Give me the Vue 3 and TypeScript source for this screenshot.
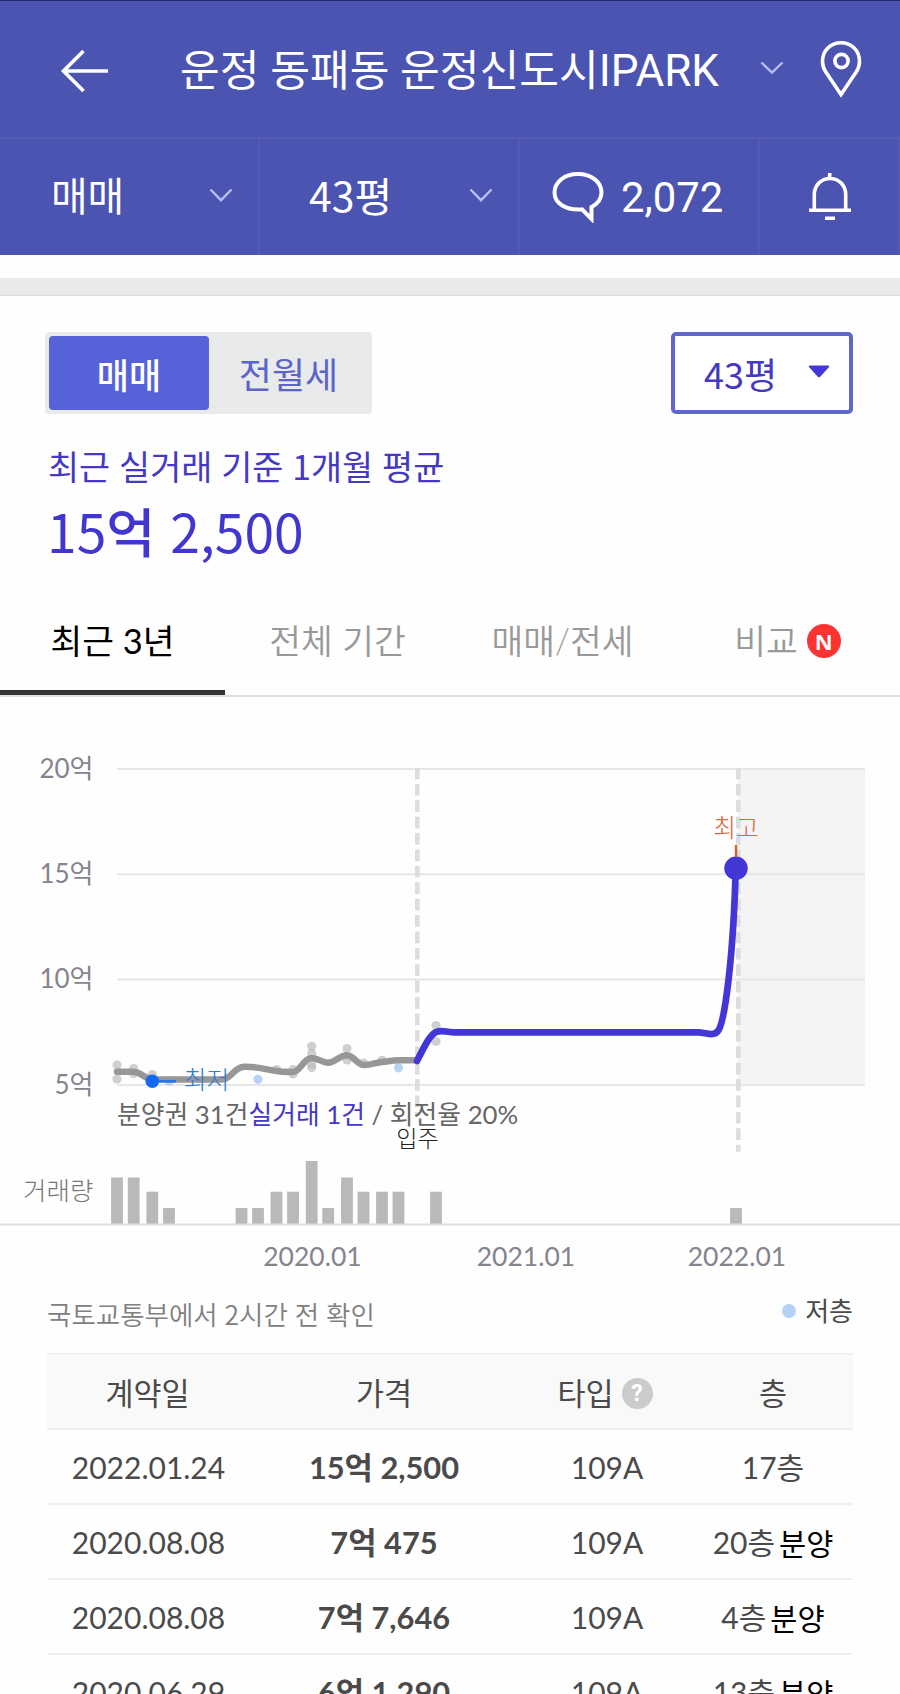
<script setup lang="ts">
interface Deal {
  date: string
  price: string
  type: string
  floor: string
  presale: boolean
}

const deals: Deal[] = [
  { date: '2022.01.24', price: '15억 2,500', type: '109A', floor: '17층', presale: false },
  { date: '2020.08.08', price: '7억 475', type: '109A', floor: '20층', presale: true },
  { date: '2020.08.08', price: '7억 7,646', type: '109A', floor: '4층', presale: true },
  { date: '2020.06.29', price: '6억 1,290', type: '109A', floor: '13층', presale: true },
]

const periods = ['최근 3년', '전체 기간', '매매/전세', '비교']

const gridLines = [
  { label: '20억', y: 769 },
  { label: '15억', y: 874.2 },
  { label: '10억', y: 979.6 },
  { label: '5억', y: 1085 },
]

const years = [
  { label: '2020.01', x: 312.5 },
  { label: '2021.01', x: 526 },
  { label: '2022.01', x: 737 },
]

// [centre x, top y] of each monthly volume bar
const bars: [number, number][] = [
  [117, 1177.5], [133.7, 1177.5], [152.3, 1191.7], [169, 1208],
  [241.5, 1208], [258, 1208], [276.5, 1191.7], [293, 1191.7],
  [311.7, 1161], [328.2, 1208], [347, 1177.5], [363.5, 1191.7],
  [382, 1191.7], [398.5, 1191.7], [436, 1191.7], [736, 1208],
]

const dots: [number, number][] = [
  [117, 1065], [117, 1079], [133.7, 1068.5], [133.7, 1073.5], [152.3, 1074.5], [276.5, 1069.5],
  [293, 1069.5], [293, 1074], [311.7, 1046.3], [311.7, 1053.5],
  [311.7, 1064], [311.7, 1067.5], [347, 1048.5], [347, 1060], [363.5, 1063],
  [382, 1060.3], [436, 1025.5], [436, 1041.5],
]

const lowDots: [number, number][] = [[169, 1081], [258, 1079.3], [398.5, 1067.8]]
</script>

<template>
  <div class="page">
    <header class="header">
      <div class="title-row">
        <svg class="back" width="50" height="46" viewBox="0 0 50 46">
          <path d="M23.500 3 L3.500 23 L23.500 43 M3 23 H48" />
        </svg>
        <h1>운정 동패동 운정신도시<span class="latin">IPARK</span></h1>
        <svg class="chev title-chev" width="24" height="14" viewBox="0 0 24 14"><path d="M1.500 1.500 L12 11.500 L22.500 1.500" /></svg>
        <svg class="pin" width="42" height="58" viewBox="0 0 42 58">
          <path d="M21 54.500 L5.500 31.500 C3.300 28.200 2.500 25.200 2.500 21.500 C2.500 10.500 10.500 2.800 21 2.800 C31.500 2.800 39.500 10.500 39.500 21.500 C39.500 25.200 38.700 28.200 36.500 31.500 Z" />
          <circle cx="21.500" cy="21" r="6.600" />
        </svg>
      </div>
      <div class="filter-row">
        <div class="filter">
          <span class="kr deal-kind">매매</span>
          <svg class="chev" width="24" height="14" viewBox="0 0 24 14"><path d="M1.500 1.500 L12 12.200 L22.500 1.500" /></svg>
        </div>
        <div class="filter size">
          <span class="kr">43평</span>
          <svg class="chev" width="24" height="14" viewBox="0 0 24 14"><path d="M1.500 1.500 L12 12.200 L22.500 1.500" /></svg>
        </div>
        <div class="filter talk">
          <svg class="bubble" width="54" height="52" viewBox="0 0 54 52">
            <path d="M40.500 48 V36 C47 32.500 50.500 27.500 50.500 21.500 C50.500 11 40.500 3 27 3 C13 3 3.500 11.500 3.500 21.500 C3.500 32 14 39.500 31 38.400 Z" />
          </svg>
          <span>2,072</span>
        </div>
        <div class="filter bell-cell">
          <svg width="44" height="50" viewBox="0 0 44 50">
            <path d="M6.300 38 V22.500 C6.300 13.500 13 6.500 22 6.500 C31 6.500 37.700 13.500 37.700 22.500 V38 M1 38.300 H43 M21.700 1 V7 M17 46.200 H27" />
          </svg>
        </div>
      </div>
    </header>

    <div class="spacer"></div>

    <section class="summary">
      <div class="controls">
        <div class="toggle">
          <button class="seg on">매매</button>
          <button class="seg">전월세</button>
        </div>
        <button class="select">
          <span>43평</span>
          <svg width="22" height="13" viewBox="0 0 22 13"><path d="M1.500 0.500 H20.500 Q22 1 20.800 2.200 L12.200 11.800 Q11 12.800 9.800 11.800 L1.200 2.200 Q0 1 1.500 0.500 Z" /></svg>
        </button>
      </div>
      <p class="caption">최근 실거래 기준 1개월 평균</p>
      <p class="price">15<b>억</b> 2,500</p>
    </section>

    <nav class="tabs">
      <div v-for="(p, i) in periods" :key="p" class="tab" :class="{ active: i === 0 }">
        <span>{{ p }}</span><i v-if="i === 3" class="new">N</i>
      </div>
    </nav>

    <svg class="chart" width="900" height="588" viewBox="0 697 900 588">
      <rect x="738" y="768" width="127" height="317" fill="#f4f4f4" />
      <g v-for="g in gridLines" :key="g.label">
        <path :d="`M117 ${g.y}H865`" stroke="#e6e6e6" stroke-width="2" />
        <text class="axis" x="93.500" :y="g.y + 8.500" text-anchor="end">{{ g.label }}</text>
      </g>
      <path d="M417.300 768V1116 M738.300 768V1151.700" stroke="#dddddd" stroke-width="4.600" stroke-dasharray="11.700 4.700" stroke-dashoffset="0.500" />

      <circle v-for="(d, i) in dots" :key="'d' + i" :cx="d[0]" :cy="d[1]" r="4.600" fill="#bdbdbd" fill-opacity=".72" />
      <circle v-for="(d, i) in lowDots" :key="'l' + i" :cx="d[0]" :cy="d[1]" r="4.600" fill="#b4d2f3" />
      <path class="line presale" d="M117 1071.700 H133 C141 1071.700 145 1079.500 154 1079.500 H222 C231 1079.500 234 1067 244 1066.800 C260 1066.300 267 1070 276 1071 C283 1072.300 288 1072 293 1072 C301 1071 303 1058.500 311.700 1058 C318 1058 322 1062.700 328 1062.700 C335 1062.500 340 1055 347 1055.200 C354 1055.500 357 1065 364 1065 C371 1065 376 1062.500 382 1062 C388 1061.500 392 1060.300 398.500 1060.300 H417" />
      <path class="line deal" d="M417 1061 C425 1045 430 1035 436 1032 C442 1029.500 446 1032.300 453 1032.300 H698 C706 1032.300 713 1037 718 1031 C725 1022 733.500 955 735.700 868" />
      <circle cx="736" cy="868.300" r="11.700" fill="#4236d6" />
      <path d="M736 845V857" stroke="#df5a32" stroke-width="2.400" />
      <text class="mark" x="736" y="836.500" text-anchor="middle" fill="#d9683c">최고</text>
      <circle cx="152.300" cy="1081.300" r="6.800" fill="#1468f2" />
      <path d="M158 1081.300H176" stroke="#1f74ea" stroke-width="2.400" />
      <text class="mark" x="206.500" y="1088.500" text-anchor="middle" fill="#2f7dd6">최저</text>

      <text class="counts" x="117" y="1123.500">분양권 31건<tspan class="real">실거래 1건</tspan> / 회전율 20%</text>
      <text class="movein" x="417.500" y="1146.500" text-anchor="middle">입주</text>

      <text class="volume" x="93.500" y="1200" text-anchor="end">거래량</text>
      <rect v-for="(b, i) in bars" :key="'b' + i" :x="b[0] - 5.900" :y="b[1]" width="11.800" :height="1224 - b[1]" fill="#b9b9b9" />
      <path d="M0 1224.500H900" stroke="#dddddd" stroke-width="2" />
      <text v-for="y in years" :key="y.label" class="axis year" :x="y.x" y="1265.700" text-anchor="middle">{{ y.label }}</text>
    </svg>

    <div class="source">
      <span class="checked">국토교통부에서 2시간 전 확인</span>
      <span class="legend"><i></i>저층</span>
    </div>

    <div class="table">
      <div class="row head">
        <div>계약일</div>
        <div>가격</div>
        <div class="kind">타입<i class="help">?</i></div>
        <div>층</div>
      </div>
      <div v-for="(d, i) in deals" :key="i" class="row">
        <div class="date">{{ d.date }}</div>
        <div class="amount">{{ d.price }}</div>
        <div>{{ d.type }}</div>
        <div>{{ d.floor }}<span v-if="d.presale" class="tag">분양</span></div>
      </div>
    </div>
  </div>
</template>

<style>
html,
body {
  margin: 0;
  background: #fefefe;
}
</style>

<style scoped>
.page {
  width: 900px;
  height: 1694px;
  overflow: hidden;
  background: #fefefe;
  font-family: Lato, "Noto Sans CJK KR", sans-serif;
  color: #4a4a4a;
}
* {
  box-sizing: border-box;
}
h1,
p {
  margin: 0;
  font-weight: 400;
}
i {
  font-style: normal;
}
button {
  margin: 0;
  padding: 0;
  border: 0;
  background: none;
  font-family: "Noto Sans CJK KR", sans-serif;
}

.header {
  height: 255px;
  border-top: 1px solid #232a6c;
  background: #4b54b1;
  color: #fff;
  font-family: Roboto, "Noto Sans CJK KR", sans-serif;
}
.header svg {
  flex: none;
  fill: none;
  stroke: #fff;
  stroke-width: 3.600;
}
.header .chev {
  stroke: #b9bdf5;
  stroke-width: 2.400;
}
.title-row {
  display: flex;
  align-items: center;
  height: 138px;
  padding-left: 60px;
  border-bottom: 2px solid #535bb7;
}
.title-row h1 {
  width: 580px;
  margin-left: 70px;
  padding-top: 4px;
  font-size: 43.200px;
  line-height: 60px;
  white-space: nowrap;
}
.latin {
  font-size: 44px;
}
.back {
  margin-top: 3px;
}
.title-chev {
  margin-top: -3px;
}
.pin {
  margin-left: 36px;
}
.filter-row {
  display: grid;
  grid-template-columns: 260px 260px 240px 140px;
  height: 116px;
}
.filter {
  display: flex;
  align-items: center;
  justify-content: space-between;
  padding: 0 25px 0 51px;
  border-right: 2px solid #535bb7;
  font-size: 41px;
  line-height: 60px;
}
.filter .chev {
  margin-top: -4px;
}
.kr {
  margin-top: -6px;
  font-family: "Noto Sans CJK KR", sans-serif;
}
.deal-kind {
  font-size: 39.800px;
}
.filter.size {
  padding-left: 49px;
}
.filter.talk {
  justify-content: flex-start;
  gap: 16px;
  padding: 0 0 0 31px;
  font-size: 41.800px;
}
.filter.talk span {
  padding-top: 1px;
}
.header .bubble {
  stroke-width: 4;
}
.filter.bell-cell {
  justify-content: center;
  padding: 0 0 0 1px;
}

.spacer {
  height: 18px;
  margin-top: 23px;
  border-bottom: 1px solid #dcdcdc;
  background: #e8eaeb;
}

.summary {
  height: 314px;
  padding: 36px 47px 0 45px;
  color: #4538c4;
  font-family: "Noto Sans CJK KR", sans-serif;
}
.controls {
  display: flex;
  justify-content: space-between;
}
.toggle {
  display: flex;
  width: 327px;
  height: 82px;
  padding: 4px;
  border-radius: 4px;
  background: #e8eaeb;
}
.seg {
  flex: 1;
  font-size: 36px;
  line-height: 69px;
  color: #5b64c8;
}
.seg.on {
  flex: none;
  width: 160px;
  border-radius: 4px;
  background: #5762d8;
  color: #fff;
  font-size: 35px;
  font-weight: 500;
}
.select {
  display: flex;
  align-items: center;
  justify-content: space-between;
  width: 182px;
  height: 82px;
  padding: 0 19px 0 29px;
  border: 4px solid #5f67cb;
  border-radius: 5px;
  background: #fff;
  color: #4538c4;
  font-size: 36px;
  line-height: 60px;
}
.select svg {
  margin-top: -3px;
  fill: #4236dc;
}
.caption {
  margin: 27px 0 0 3px;
  font-size: 33.800px;
  line-height: 50px;
  word-spacing: 1.300px;
}
.price {
  margin: 1px 0 0 2px;
  font-size: 53.400px;
  line-height: 76px;
  color: #4236d0;
  word-spacing: 3px;
}
.price b {
  font-weight: 500;
}

.tabs {
  display: grid;
  grid-template-columns: repeat(4, 1fr);
  height: 87px;
  border-bottom: 2px solid #e0e0e0;
}
.tab {
  display: flex;
  align-items: center;
  justify-content: center;
  padding-bottom: 22px;
  border-bottom: 5px solid transparent;
  color: #999;
  font-size: 34.500px;
  font-weight: 350;
}
.tab.active {
  border-bottom-color: #333;
  color: #000;
  font-weight: 400;
}
.new {
  width: 34px;
  height: 34px;
  margin: 4px 0 0 9px;
  border-radius: 50%;
  background: #fb3333;
  color: #fff;
  font: 700 22px/34px "Noto Sans", sans-serif;
  text-align: center;
}

.chart {
  display: block;
}
.axis {
  fill: #84848e;
  font-size: 26px;
}
.year {
  font-size: 26.500px;
}
.line {
  fill: none;
  stroke-linecap: round;
  stroke-linejoin: round;
}
.presale {
  stroke: #979797;
  stroke-width: 6.500;
}
.deal {
  stroke: #4236d6;
  stroke-width: 6.700;
}
.mark {
  font-size: 24.800px;
  font-weight: 300;
}
.counts {
  fill: #666;
  font-size: 25.800px;
}
.real {
  fill: #4538c4;
}
.movein {
  fill: #222;
  font-size: 23px;
  font-weight: 300;
}
.volume {
  fill: #777;
  font-size: 25.500px;
  font-weight: 300;
}

.source {
  display: flex;
  justify-content: space-between;
  height: 68px;
  padding: 5px 47px 0 47px;
  font-size: 26.500px;
  line-height: 48px;
}
.checked {
  color: #808080;
  font-family: "Noto Sans CJK KR", sans-serif;
  font-weight: 350;
  word-spacing: 1px;
}
.legend {
  display: flex;
  align-items: center;
  height: 41px;
  font-size: 26px;
}
.legend i {
  width: 14px;
  height: 14px;
  margin-right: 9px;
  border-radius: 50%;
  background: #b4d2f3;
}

.table {
  margin: 0 47px;
}
.row {
  display: grid;
  grid-template-columns: 201px 272px 174px 158px;
  height: 75px;
  border-bottom: 2px solid #f0f0f0;
  font-size: 30px;
  line-height: 75px;
}
.row > div {
  display: flex;
  align-items: center;
  justify-content: center;
  white-space: pre;
}
.head {
  height: 77px;
  border-top: 2px solid #f0f0f0;
  background: #f9f9f9;
  font-size: 30.500px;
}
.head > div {
  padding-top: 1px;
}
.head > .kind {
  padding-right: 4px;
}
.row > .date {
  padding-left: 2px;
}
.help {
  width: 31px;
  height: 31px;
  margin-left: 8px;
  border-radius: 50%;
  background: #cbcbcb;
  color: #fff;
  font: 700 23px/31px Roboto, sans-serif;
  text-align: center;
}
.amount {
  font-size: 30.800px;
  font-weight: 700;
}
.tag {
  margin-left: 4px;
  color: #000;
  font-family: "Noto Sans CJK KR", sans-serif;
  font-size: 29.500px;
  font-weight: 400;
}
</style>
